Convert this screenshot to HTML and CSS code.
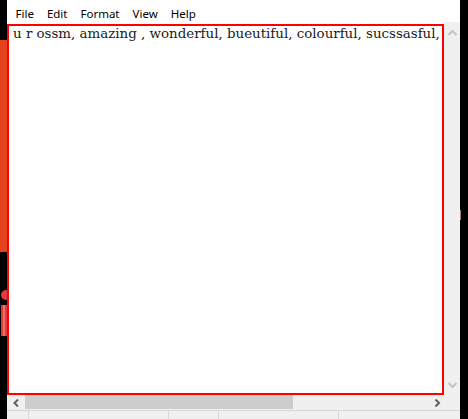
FILE: index.html
```html
<!DOCTYPE html>
<html>
<head>
<meta charset="utf-8">
<link rel="stylesheet" href="styles.css">
</head>
<body>
<div class="screen">
  <div class="bg-left">
    <div class="bl-black1"></div>
    <div class="bl-orange"></div>
    <div class="bl-black2"></div>
    <div class="bl-dot"></div>
    <div class="bl-gap"></div>
    <div class="bl-bar"></div>
    <div class="bl-black3"></div>
  </div>
  <div class="window">
    <div class="menubar">
      <span class="menu">File</span>
      <span class="menu">Edit</span>
      <span class="menu">Format</span>
      <span class="menu">View</span>
      <span class="menu">Help</span>
    </div>
    <div class="main">
      <div class="editcol">
        <div class="edit">u r ossm, amazing , wonderful, bueutiful, colourful, sucssasful,</div>
        <div class="hscroll">
          <div class="harrow">
            <svg width="7" height="8" viewBox="0 0 7 8"><path d="M5 0.5 L1.5 4 L5 7.5" fill="none" stroke="#606060" stroke-width="2"/></svg>
          </div>
          <div class="hthumb"></div>
          <div class="htrack"></div>
          <div class="harrow right">
            <svg width="7" height="8" viewBox="0 0 7 8"><path d="M1.5 0.5 L5 4 L1.5 7.5" fill="none" stroke="#606060" stroke-width="2"/></svg>
          </div>
        </div>
      </div>
      <div class="vscroll">
        <div class="varrow up">
          <svg width="9" height="6" viewBox="0 0 9 6"><path d="M0.5 5 L4.5 1 L8.5 5" fill="none" stroke="#c2c2c2" stroke-width="2"/></svg>
        </div>
        <div class="vfill"></div>
        <div class="varrow down">
          <svg width="9" height="6" viewBox="0 0 9 6"><path d="M0.5 1 L4.5 5 L8.5 1" fill="none" stroke="#c2c2c2" stroke-width="2"/></svg>
        </div>
        <div class="corner"></div>
      </div>
    </div>
    <div class="status">
      <div class="seg s1"></div>
      <div class="seg s2"></div>
      <div class="seg s3"></div>
      <div class="seg s4"></div>
      <div class="seg s5"></div>
    </div>
  </div>
  <div class="bg-right">
    <div class="br-mark"></div>
  </div>
</div>
</body>
</html>
```
FILE: styles.css
```css
* { box-sizing: border-box; }
html, body { margin: 0; padding: 0; background: #000; }
.screen { display: flex; width: 468px; height: 419px; overflow: hidden; }

.bg-left { width: 7px; display: flex; flex-direction: column; flex: none; }
.bl-black1 { height: 40px; background: #000; }
.bl-orange { height: 212px; background: #e5431b; }
.bl-black2 { height: 38px; background: #000; }
.bl-dot { height: 10px; width: 10px; margin-left: 1px; border-radius: 50%; background: #e23a3a; }
.bl-gap { height: 5px; background: #000; }
.bl-bar { height: 31px; margin-left: 1px; background: linear-gradient(90deg, #e23a3a 0 2px, #f07070 2px 4px, #e23a3a 4px); }
.bl-black3 { flex: 1; background: #000; }

.window { width: 453px; flex: none; display: flex; flex-direction: column; background: #fff; }

.menubar { height: 22px; display: flex; align-items: flex-start; padding-left: 8.5px; background: #fff; }
.menu { font-family: "Noto Sans", sans-serif; font-size: 11.5px; line-height: 12px; padding-top: 8px; color: #000; margin-right: 13px; }

.main { display: flex; height: 388px; }
.editcol { flex: 1; display: flex; flex-direction: column; }
.edit {
  margin-top: 2px; height: 371px; border: 2px solid #ff0000;
  font-family: "DejaVu Serif", serif; font-size: 13.4px; line-height: 16px;
  color: #1a1a1a; padding-left: 4px; white-space: nowrap; overflow: hidden;
}
.hscroll { height: 15px; display: flex; background: #f0f0f0; }
.harrow { width: 18px; display: flex; align-items: center; justify-content: center; padding-top: 1px; }
.harrow.right { width: 17px; justify-content: flex-start; padding-left: 7px; }
.hthumb { width: 268px; background: #cdcdcd; margin-bottom: 1px; }
.htrack { flex: 1; }

.vscroll { width: 16px; display: flex; flex-direction: column; background: #f0f0f0; }
.varrow { height: 18px; display: flex; justify-content: center; }
.varrow.up { align-items: center; padding-top: 4px; }
.varrow.down { align-items: center; padding-bottom: 3px; }
.vfill { flex: 1; }
.corner { height: 15px; }

.status { height: 9px; display: flex; background: #f0f0f0; border-top: 1px solid #d6d6d6; }
.seg { height: 100%; border-right: 1px solid #d9d9d9; }
.s1 { width: 22px; }
.s2 { width: 140px; }
.s3 { width: 50px; }
.s4 { width: 120px; }
.s5 { flex: 1; border-right: none; }

.bg-right { width: 8px; flex: none; background: #000; position: relative; }
.br-mark { position: absolute; left: 0; top: 210px; width: 1px; height: 10px; background: #a57777; }
```
